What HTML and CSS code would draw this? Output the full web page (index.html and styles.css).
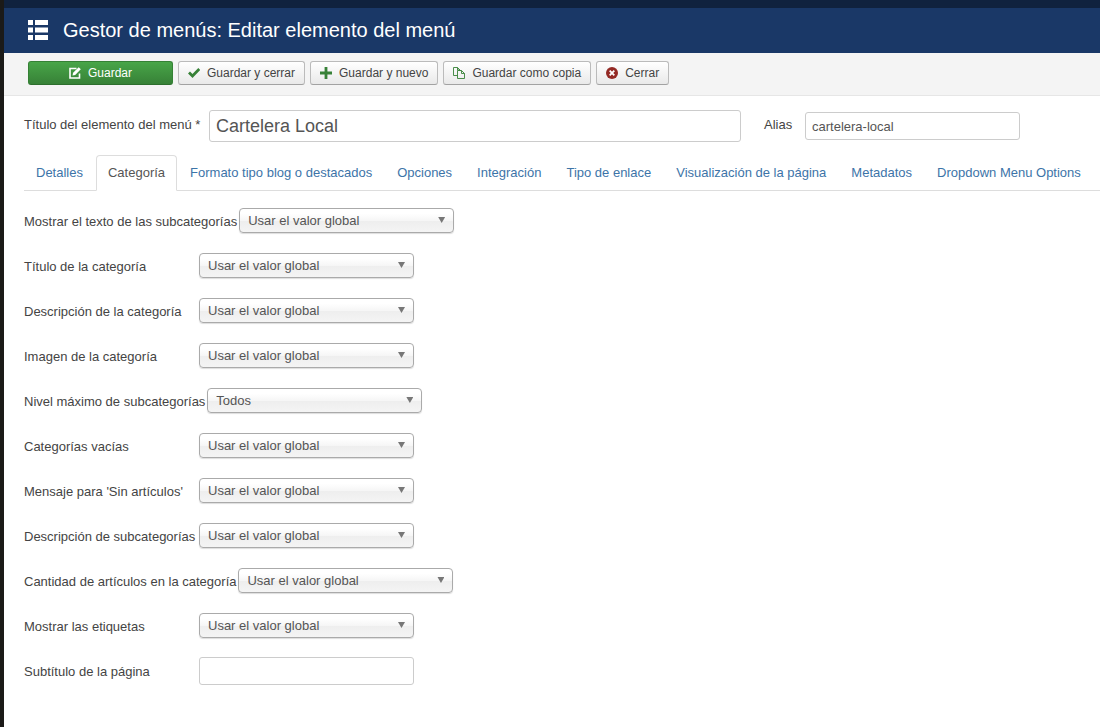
FILE: index.html
```html
<!DOCTYPE html>
<html lang="es">
<head>
<meta charset="utf-8">
<meta name="viewport" content="width=device-width, initial-scale=1">
<title>Gestor de menús: Editar elemento del menú</title>
<link rel="stylesheet" href="styles.css">
</head>
<body>
<header class="header">
  <svg class="header-icon" viewBox="0 0 20 20" aria-hidden="true"><path d="M0 0h5v5H0zM7 0h13v5H7zM0 7.500h5v5H0zM7 7.500h13v5H7zM0 15h5v5H0zM7 15h13v5H7z"/></svg>
  <h1 class="page-title">Gestor de menús: Editar elemento del menú</h1>
</header>
<div class="toolbar" role="toolbar" aria-label="Acciones">
  <button type="button" class="btn btn-success"><svg class="icon" viewBox="0 0 12 12" aria-hidden="true"><path d="M7.500 1.500H1v9.500h9.500V6.500" fill="none" stroke="currentColor" stroke-width="1.600"/><path d="M3.500 8.500l.6-2.700L9.700.2l2.100 2.100-5.600 5.600z" fill="currentColor"/></svg>Guardar</button>
  <button type="button" class="btn"><svg class="icon green" viewBox="0 0 12 12" aria-hidden="true"><path d="M1 5.500l3.500 3.500L11.300 2" fill="none" stroke="currentColor" stroke-width="2.800"/></svg>Guardar y cerrar</button>
  <button type="button" class="btn"><svg class="icon green" viewBox="0 0 12 12" aria-hidden="true"><path d="M6 0v12M0 6h12" fill="none" stroke="currentColor" stroke-width="2.800"/></svg>Guardar y nuevo</button>
  <button type="button" class="btn"><svg class="icon green" viewBox="0 0 12 12" aria-hidden="true"><path d="M4.500 8.500H.5v-8h4l2.500 2.500v1M4.500.5V3H7M4.500 3.500h4l3 3v5h-7zM8.500 3.500v3h3" fill="none" stroke="currentColor" stroke-width=".9"/></svg>Guardar como copia</button>
  <button type="button" class="btn"><svg class="icon red" viewBox="0 0 12 12" aria-hidden="true"><circle cx="6" cy="6" r="6" fill="currentColor"/><path d="M3.700 3.700l4.600 4.600M8.300 3.700L3.700 8.300" stroke="#fff" stroke-width="1.800"/></svg>Cerrar</button>
</div>
<main class="content">
  <form>
    <div class="title-row">
      <label class="title-label" for="title">Título del elemento del menú *</label>
      <input class="input input-large" id="title" type="text" value="Cartelera Local">
      <label class="alias-label" for="alias">Alias</label>
      <input class="input" id="alias" type="text" value="cartelera-local">
    </div>
    <nav class="tabs">
      <a class="tab" href="#">Detalles</a>
      <a class="tab active" href="#" aria-current="page">Categoría</a>
      <a class="tab" href="#">Formato tipo blog o destacados</a>
      <a class="tab" href="#">Opciones</a>
      <a class="tab" href="#">Integración</a>
      <a class="tab" href="#">Tipo de enlace</a>
      <a class="tab" href="#">Visualización de la página</a>
      <a class="tab" href="#">Metadatos</a>
      <a class="tab" href="#">Dropdown Menu Options</a>
    </nav>
    <div class="fields">
      <div class="field"><label for="f1">Mostrar el texto de las subcategorías</label><span class="select"><select id="f1"><option>Usar el valor global</option></select></span></div>
      <div class="field"><label for="f2">Título de la categoría</label><span class="select"><select id="f2"><option>Usar el valor global</option></select></span></div>
      <div class="field"><label for="f3">Descripción de la categoría</label><span class="select"><select id="f3"><option>Usar el valor global</option></select></span></div>
      <div class="field"><label for="f4">Imagen de la categoría</label><span class="select"><select id="f4"><option>Usar el valor global</option></select></span></div>
      <div class="field"><label for="f5">Nivel máximo de subcategorías</label><span class="select"><select id="f5"><option>Todos</option></select></span></div>
      <div class="field"><label for="f6">Categorías vacías</label><span class="select"><select id="f6"><option>Usar el valor global</option></select></span></div>
      <div class="field"><label for="f7">Mensaje para 'Sin artículos'</label><span class="select"><select id="f7"><option>Usar el valor global</option></select></span></div>
      <div class="field"><label for="f8">Descripción de subcategorías</label><span class="select"><select id="f8"><option>Usar el valor global</option></select></span></div>
      <div class="field"><label for="f9">Cantidad de artículos en la categoría</label><span class="select"><select id="f9"><option>Usar el valor global</option></select></span></div>
      <div class="field"><label for="f10">Mostrar las etiquetas</label><span class="select"><select id="f10"><option>Usar el valor global</option></select></span></div>
      <div class="field"><label for="f11">Subtítulo de la página</label><input class="input" id="f11" type="text"></div>
    </div>
  </form>
</main>
</body>
</html>
```
FILE: styles.css
```css
* { box-sizing: border-box; }

body {
  margin: 0;
  min-height: 100vh;
  border-left: 4px solid #1b1a18;
  background: #fff;
  color: #444;
  font-family: "Liberation Sans", Arial, sans-serif;
  font-size: 13px;
  line-height: 18px;
}

button, input, select { font-family: inherit; }

.header {
  display: flex;
  align-items: center;
  gap: 15px;
  padding: 10px 24px 11px;
  border-top: 8px solid #10223e;
  background: #1a3867;
  color: #fff;
}

.header-icon { width: 20px; height: 20px; fill: #fff; }

.page-title {
  margin: 0;
  font-size: 20px;
  line-height: 24px;
  font-weight: normal;
}

.toolbar {
  display: flex;
  flex-wrap: wrap;
  gap: 5px;
  padding: 8px 24px 10px;
  border-bottom: 1px solid #e6e6e6;
  background: #f4f4f4;
}

.btn {
  display: inline-flex;
  align-items: center;
  justify-content: center;
  gap: 7px;
  height: 24px;
  padding: 0 9px;
  border: 1px solid #bbb;
  border-bottom-color: #a2a2a2;
  border-radius: 3px;
  background: linear-gradient(#fff, #e9e9e9);
  color: #444;
  font-size: 12px;
  line-height: 16px;
}

.btn-success {
  width: 145px;
  border-color: #358135 #358135 #2d6e2d;
  background: linear-gradient(#48a548, #378137);
  color: #fff;
}

.icon { width: 12px; height: 12px; }
.green { color: #378137; }
.red { color: #942a25; }

.content { padding: 14px 0 24px 20px; }

.title-row {
  display: flex;
  align-items: center;
  padding-right: 80px;
}

.title-row label { padding-bottom: 2px; }
.title-label { width: 185px; }
.alias-label { width: 41px; margin-left: 23px; }

.input {
  width: 215px;
  height: 28px;
  padding: 0 6px;
  border: 1px solid #ccc;
  border-radius: 3px;
  background: #fff;
  color: #555;
  font-size: 13px;
}

.title-row .input-large {
  flex: 1;
  min-width: 0;
  height: 32px;
  font-size: 18px;
}

.tabs {
  display: flex;
  gap: 1px;
  margin-top: 13px;
  border-bottom: 1px solid #ddd;
}

.tab {
  margin-bottom: -1px;
  padding: 8px 11px;
  border: 1px solid transparent;
  border-radius: 4px 4px 0 0;
  color: #3d74a8;
  text-decoration: none;
  white-space: nowrap;
}

.tab.active {
  border-color: #ddd #ddd #fff;
  background: #fff;
  color: #555;
}

.fields {
  display: flex;
  flex-direction: column;
  gap: 17px;
  padding-top: 16px;
}

.field {
  display: flex;
  align-items: center;
  gap: 2px;
  height: 28px;
}

.field label {
  min-width: 173px;
  padding-top: 2px;
  white-space: nowrap;
}

.select {
  display: grid;
  width: 215px;
  margin-bottom: 2px;
}

.select select {
  grid-area: 1 / 1;
  height: 25px;
  padding: 0 24px 0 8px;
  border: 1px solid #aaa;
  border-radius: 4px;
  appearance: none;
  background: linear-gradient(#fff 20%, #f6f6f6 50%, #eee 52%, #f4f4f4);
  box-shadow: 0 1px 1px #ddd;
  color: #555;
  font-size: 13px;
}

.select::after {
  content: "";
  grid-area: 1 / 1;
  place-self: center end;
  width: 7px;
  height: 6px;
  margin-right: 9px;
  background: #777;
  clip-path: polygon(0 0, 100% 0, 50% 100%);
  pointer-events: none;
}
```
